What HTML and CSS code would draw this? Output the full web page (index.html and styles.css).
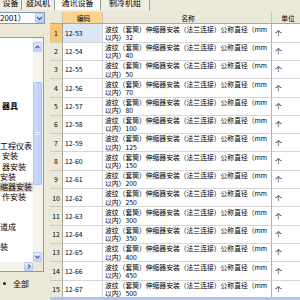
FILE: index.html
```html
<!DOCTYPE html>
<html lang="zh-CN">
<head>
<meta charset="UTF-8">
<meta name="viewport" content="width=device-width, initial-scale=1.0">
<title>定额库</title>
<link rel="stylesheet" href="styles.css">
</head>
<body>
  <div class="tabs">
    <span class="tab tab-1">设备</span>
    <span class="tab tab-2">鼓风机</span>
    <span class="tab tab-3 tab-active">通讯设备</span>
    <span class="tab tab-4">制冷机组</span>
  </div>

  <div class="main">
    <div class="side">
      <div class="combo">
        <span class="combo-text">2001）</span>
        <span class="combo-btn">
          <svg width="7" height="5" viewBox="0 0 7 5"><path d="M1 1 L3.5 3.5 L6 1" fill="none" stroke="#4d6185" stroke-width="1.4"/></svg>
        </span>
      </div>

      <div class="tree">
        <div class="tree-body">
          <div class="tree-list">
            <div class="node node-bold">器具</div>
            <div class="node"></div>
            <div class="node"></div>
            <div class="node"></div>
            <div class="node node-flush">工程仪表</div>
            <div class="node">安装</div>
            <div class="node">器安装</div>
            <div class="node node-flush">安装</div>
            <div class="node node-flush node-sel">缩器安装（</div>
            <div class="node">作安装</div>
            <div class="node"></div>
            <div class="node"></div>
            <div class="node node-flush">道成</div>
            <div class="node"></div>
            <div class="node node-flush">装</div>
          </div>
          <div class="vscroll">
            <span class="sbtn">
              <svg width="5" height="4" viewBox="0 0 5 4"><path d="M0.6 3 L2.5 1 L4.4 3" fill="none" stroke="#4d6185" stroke-width="1.2"/></svg>
            </span>
            <span class="track"><span class="thumb"><span class="grip"></span></span></span>
            <span class="sbtn">
              <svg width="5" height="4" viewBox="0 0 5 4"><path d="M0.6 1 L2.5 3 L4.4 1" fill="none" stroke="#4d6185" stroke-width="1.2"/></svg>
            </span>
          </div>
        </div>
        <div class="hscroll">
          <span class="htrack"></span>
          <span class="sbtn sbtn-h">
            <svg width="4" height="5" viewBox="0 0 4 5"><path d="M1 0.6 L3 2.5 L1 4.4" fill="none" stroke="#4d6185" stroke-width="1.2"/></svg>
          </span>
          <span class="corner"></span>
        </div>
      </div>

      <div class="radio-row"><span class="dot"></span>全部</div>
    </div>

    <div class="grid">
      <div class="grid-head">
        <span class="cell c-rn"></span>
        <span class="cell c-code c-head-hl">编码</span>
        <span class="cell c-name">名称</span>
        <span class="cell c-unit">单位</span>
      </div>

      <div class="grid-body">
        <div class="row row-cur">
          <span class="cell c-rn">1</span><span class="cell c-code">12-53</span>
          <span class="cell c-name"><span class="ln">波纹（套筒）伸缩器安装（法兰连接）公称直径（mm</span><span class="ln">以内）32</span></span><span class="cell c-unit">个</span>
        </div>
        <div class="row">
          <span class="cell c-rn">2</span><span class="cell c-code">12-54</span>
          <span class="cell c-name"><span class="ln">波纹（套筒）伸缩器安装（法兰连接）公称直径（mm</span><span class="ln">以内）40</span></span><span class="cell c-unit">个</span>
        </div>
        <div class="row">
          <span class="cell c-rn">3</span><span class="cell c-code">12-55</span>
          <span class="cell c-name"><span class="ln">波纹（套筒）伸缩器安装（法兰连接）公称直径（mm</span><span class="ln">以内）50</span></span><span class="cell c-unit">个</span>
        </div>
        <div class="row">
          <span class="cell c-rn">4</span><span class="cell c-code">12-56</span>
          <span class="cell c-name"><span class="ln">波纹（套筒）伸缩器安装（法兰连接）公称直径（mm</span><span class="ln">以内）70</span></span><span class="cell c-unit">个</span>
        </div>
        <div class="row">
          <span class="cell c-rn">5</span><span class="cell c-code">12-57</span>
          <span class="cell c-name"><span class="ln">波纹（套筒）伸缩器安装（法兰连接）公称直径（mm</span><span class="ln">以内）80</span></span><span class="cell c-unit">个</span>
        </div>
        <div class="row">
          <span class="cell c-rn">6</span><span class="cell c-code">12-58</span>
          <span class="cell c-name"><span class="ln">波纹（套筒）伸缩器安装（法兰连接）公称直径（mm</span><span class="ln">以内）100</span></span><span class="cell c-unit">个</span>
        </div>
        <div class="row">
          <span class="cell c-rn">7</span><span class="cell c-code">12-59</span>
          <span class="cell c-name"><span class="ln">波纹（套筒）伸缩器安装（法兰连接）公称直径（mm</span><span class="ln">以内）125</span></span><span class="cell c-unit">个</span>
        </div>
        <div class="row">
          <span class="cell c-rn">8</span><span class="cell c-code">12-60</span>
          <span class="cell c-name"><span class="ln">波纹（套筒）伸缩器安装（法兰连接）公称直径（mm</span><span class="ln">以内）150</span></span><span class="cell c-unit">个</span>
        </div>
        <div class="row">
          <span class="cell c-rn">9</span><span class="cell c-code">12-61</span>
          <span class="cell c-name"><span class="ln">波纹（套筒）伸缩器安装（法兰连接）公称直径（mm</span><span class="ln">以内）200</span></span><span class="cell c-unit">个</span>
        </div>
        <div class="row">
          <span class="cell c-rn">10</span><span class="cell c-code">12-62</span>
          <span class="cell c-name"><span class="ln">波纹（套筒）伸缩器安装（法兰连接）公称直径（mm</span><span class="ln">以内）250</span></span><span class="cell c-unit">个</span>
        </div>
        <div class="row">
          <span class="cell c-rn">11</span><span class="cell c-code">12-63</span>
          <span class="cell c-name"><span class="ln">波纹（套筒）伸缩器安装（法兰连接）公称直径（mm</span><span class="ln">以内）300</span></span><span class="cell c-unit">个</span>
        </div>
        <div class="row">
          <span class="cell c-rn">12</span><span class="cell c-code">12-64</span>
          <span class="cell c-name"><span class="ln">波纹（套筒）伸缩器安装（法兰连接）公称直径（mm</span><span class="ln">以内）350</span></span><span class="cell c-unit">个</span>
        </div>
        <div class="row">
          <span class="cell c-rn">13</span><span class="cell c-code">12-65</span>
          <span class="cell c-name"><span class="ln">波纹（套筒）伸缩器安装（法兰连接）公称直径（mm</span><span class="ln">以内）400</span></span><span class="cell c-unit">个</span>
        </div>
        <div class="row">
          <span class="cell c-rn">14</span><span class="cell c-code">12-66</span>
          <span class="cell c-name"><span class="ln">波纹（套筒）伸缩器安装（法兰连接）公称直径（mm</span><span class="ln">以内）450</span></span><span class="cell c-unit">个</span>
        </div>
        <div class="row">
          <span class="cell c-rn">15</span><span class="cell c-code">12-67</span>
          <span class="cell c-name"><span class="ln">波纹（套筒）伸缩器安装（法兰连接）公称直径（mm</span><span class="ln">以内）500</span></span><span class="cell c-unit">个</span>
        </div>
      </div>
      <div class="hbar"></div>
    </div>
  </div>
</body>
</html>
```

FILE: styles.css
```css
* {
  box-sizing: border-box;
}

body {
  margin: 0;
  width: 300px;
  height: 300px;
  overflow: hidden;
  background-color: #ece9d8;
  font-family: "Noto Sans CJK SC", "Liberation Sans", sans-serif;
  color: #000;
}

/* top tab strip, only the lower half shows */
.tabs {
  display: flex;
  height: 10px;
}

.tab {
  height: 10px;
  line-height: 5px;
  font-size: 8px;
  text-align: center;
  white-space: nowrap;
  overflow: hidden;
  background-color: #f1efe4;
  border-right: 1px solid #8f9aa0;
}

.tab-1 { width: 22px; }
.tab-2 { width: 33px; }
.tab-3 { width: 46px; }
.tab-4 { width: 49px; }

.tab-active {
  background-color: #fbfbf8;
}

.main {
  display: flex;
  height: 290px;
  padding-top: 2px;
}

/* left panel */
.side {
  width: 50px;
  flex: none;
  display: flex;
  flex-direction: column;
}

.combo {
  width: 45px;
  height: 12px;
  display: flex;
  align-items: center;
  background-color: #fff;
  border: 1px solid #7f9db9;
  border-left: none;
}

.combo-text {
  flex: 1;
  font-size: 8px;
  line-height: 10px;
  white-space: nowrap;
  overflow: hidden;
}

.combo-btn {
  width: 9px;
  height: 10px;
  display: flex;
  align-items: center;
  justify-content: center;
  background: linear-gradient(#dce6fd, #b9cdf8);
  border: 1px solid #b3c6f2;
  border-radius: 1px;
}

.tree {
  width: 44px;
  height: 235px;
  margin-top: 13px;
  background-color: #fff;
  border: 1px solid #8c9bab;
  border-left: none;
  display: flex;
  flex-direction: column;
}

.tree-body {
  display: flex;
  height: 224px;
}

.tree-list {
  flex: 1;
  overflow: hidden;
  padding-top: 63px;
}

.node {
  height: 10.1px;
  line-height: 10.1px;
  font-size: 8px;
  white-space: nowrap;
  padding-left: 2px;
}

.node-flush {
  padding-left: 0;
}

.node-bold {
  font-weight: bold;
}

.node-sel {
  background-color: #d9d8d4;
}

.vscroll {
  width: 10px;
  flex: none;
  display: flex;
  flex-direction: column;
  padding-top: 4px;
  background-color: #f4f3ee;
}

.sbtn {
  width: 9px;
  height: 10px;
  flex: none;
  display: flex;
  align-items: center;
  justify-content: center;
  background: linear-gradient(#e1e9fd, #c0d1f8);
  border: 1px solid #b8caf3;
  border-radius: 1px;
}

.track {
  flex: 1;
  padding-top: 30px;
}

.thumb {
  display: flex;
  align-items: center;
  justify-content: center;
  width: 9px;
  height: 103px;
  background: linear-gradient(90deg, #cbdafc, #bccff9);
  border: 1px solid #adc3f2;
  border-radius: 1px;
}

.grip {
  width: 5px;
  height: 3px;
  border-top: 1px solid #eef3fe;
  border-bottom: 1px solid #eef3fe;
}

.hscroll {
  display: flex;
  height: 9px;
  background-color: #f4f3ee;
}

.htrack {
  flex: 1;
}

.sbtn-h {
  width: 9px;
  height: 9px;
}

.corner {
  width: 10px;
  background-color: #ece9d8;
}

.radio-row {
  display: flex;
  align-items: center;
  height: 12px;
  margin-top: 5px;
  font-size: 8px;
}

.dot {
  width: 3px;
  height: 3px;
  margin: 0 7px 0 3px;
  border-radius: 50%;
  background-color: #222;
}

/* grid */
.grid {
  flex: 1;
  display: flex;
  flex-direction: column;
  height: 288px;
  overflow: hidden;
  background-color: #fff;
}

.grid-head {
  display: flex;
  height: 12.35px;
  flex: none;
  background-color: #ece9d8;
  border-bottom: 1px solid #aca899;
}

.grid-head .cell {
  justify-content: center;
  border-right: 1px solid #c9c5b5;
  border-bottom: none;
  background-color: #ebe8d9;
}

.grid-head .c-name {
  align-items: center;
}

.grid-head .c-head-hl {
  background-color: #fad48e;
}

.grid-body {
  flex: 1;
  overflow: hidden;
}

.row {
  display: flex;
  height: 18.3px;
}

.cell {
  flex: none;
  display: flex;
  align-items: center;
  font-size: 6.8px;
  line-height: 8.3px;
  white-space: nowrap;
  overflow: hidden;
  border-right: 1px solid #d6d6d6;
  border-bottom: 1px solid #d6d6d6;
}

.c-rn {
  width: 13px;
  justify-content: center;
  background-color: #ebe9da;
  border-right: 1px solid #aca899;
  border-bottom: 1px solid #cdc9ba;
}

.c-code {
  width: 40px;
  padding-left: 2px;
}

.c-name {
  width: 169px;
  padding-left: 2px;
  flex-direction: column;
  align-items: flex-start;
  justify-content: center;
  border-right: 1px solid #b2b2b2;
}

.ln {
  display: block;
  height: 8.3px;
}

.c-unit {
  width: 30px;
  padding-left: 3px;
}

.row-cur .c-rn {
  background-color: #f8c577;
}

.row-cur .c-code {
  background-color: #dce7f6;
}

.hbar {
  height: 3px;
  flex: none;
  background-color: #b4c2ec;
}
```
